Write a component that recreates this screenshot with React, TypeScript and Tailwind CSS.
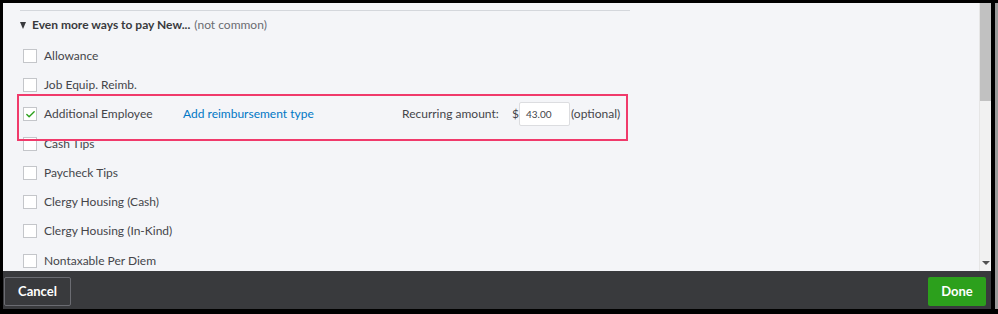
import { Check } from 'lucide-react';

const rows = [
  'Allowance',
  'Job Equip. Reimb.',
  'Additional Employee',
  'Cash Tips',
  'Paycheck Tips',
  'Clergy Housing (Cash)',
  'Clergy Housing (In-Kind)',
  'Nontaxable Per Diem',
];

function Box({ checked }: { checked?: boolean }) {
  return (
    <span className="w-[14px] h-[14px] shrink-0 bg-white border border-[#c4c6ca] flex items-center justify-center">
      {checked && <Check className="w-[11px] h-[11px] text-[#2ca01c]" strokeWidth={3} />}
    </span>
  );
}

export default function App() {
  return (
    <div className="w-[998px] h-[314px] bg-black flex pt-[3px] pl-[3px] pb-[5px] font-['Lato',sans-serif] text-[12px] text-[#44454a]">
      <div className="w-[988px] flex flex-col">
        <div className="h-[268px] flex">
          <div className="relative flex-1 bg-[#f4f5f8] pt-[7px] overflow-hidden">
            <div className="ml-[17px] w-[610px] h-px bg-[#d4d7dc]" />
            <div className="h-[28px] flex items-center pl-[17px]">
              <span className="w-0 h-0 mr-[6px] border-l-[3.5px] border-r-[3.5px] border-t-[7px] border-l-transparent border-r-transparent border-t-[#393a3d]" />
              <span className="font-bold text-[#393a3d]">Even more ways to pay New...</span>
              <span className="ml-[4px] text-[#6b6c72]">(not common)</span>
            </div>
            <div className="mt-[2px]">
              {rows.map((r) => (
                <div key={r} className="h-[29.3px] flex items-center pl-[20px]">
                  <Box checked={r === 'Additional Employee'} />
                  <span className={r === 'Additional Employee' ? 'ml-[7px] w-[139px]' : 'ml-[7px]'}>{r}</span>
                  {r === 'Additional Employee' && (
                    <>
                      <span className="w-[219px] text-[#0077c5]">Add reimbursement type</span>
                      <span className="w-[110px]">Recurring amount:</span>
                      <span className="w-[7px]">$</span>
                      <span className="w-[51px] h-[24px] bg-white border border-[#dcdde0] rounded-[2px] flex items-center pl-[6px] text-[10px]">43.00</span>
                      <span className="ml-px">(optional)</span>
                    </>
                  )}
                </div>
              ))}
            </div>
            <div className="absolute left-[14px] top-[91px] w-[611px] h-[47px] border-2 border-[#f03a6b]" />
          </div>
          <div className="w-[12px] border-l border-[#e6e6e6] bg-[#f1f1f1] flex flex-col">
            <div className="h-[98px] bg-[#c1c1c1]" />
            <div className="flex-1" />
            <div className="h-[16px] flex items-center justify-center">
              <span className="w-0 h-0 border-l-[4px] border-r-[4px] border-t-[4px] border-l-transparent border-r-transparent border-t-[#505050]" />
            </div>
          </div>
        </div>
        <div className="h-[38px] bg-[#393a3d] flex items-start justify-between pt-[6px] pl-[1px] pr-[5px]">
          <button className="w-[67px] h-[29px] rounded-[2px] border border-[#6b6c72] text-white font-bold text-[13px]">Cancel</button>
          <button className="w-[58px] h-[29px] rounded-[2px] bg-[#2ca01c] text-white font-bold text-[13px]">Done</button>
        </div>
      </div>
      <div className="w-[4px]" />
      <div className="w-[3px] bg-[#9a9a9a]" />
    </div>
  );
}
